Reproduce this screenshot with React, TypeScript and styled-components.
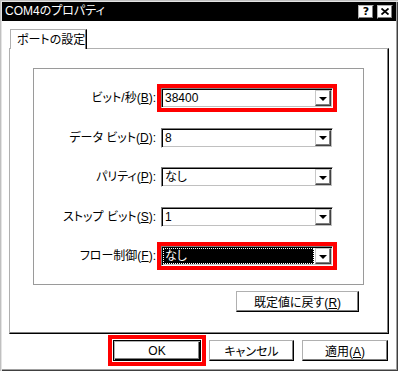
import React from 'react';
import styled, {createGlobalStyle, css} from 'styled-components';

const GlobalStyle = createGlobalStyle`
  body {
    margin: 0;
    background: #fff;
  }
`;

const uiFont = `"Liberation Sans", "Noto Sans CJK JP", sans-serif`;

const raised = css`
  border: 1px solid;
  border-color: #b0b0b0 #000 #000 #b0b0b0;
  box-shadow: inset -1px -1px #808080;
`;

const Window = styled.div`
  box-sizing: border-box;
  width: 398px;
  height: 371px;
  padding: 2px;
  background: #fff;
  box-shadow: inset 1px 1px #c0c0c0, inset 2px 2px #e4e4e4, inset -1px -1px #404040, inset -2px -2px #a0a0a0;
  display: flex;
  flex-direction: column;
  font-family: ${uiFont};
  font-size: 12px;
  font-feature-settings: 'palt';
  color: #000;
`;

const TitleBar = styled.div`
  height: 19px;
  background: #000;
  color: #fff;
  display: flex;
  align-items: center;
  justify-content: space-between;
  padding: 0 3px 0 3px;
`;

const Title = styled.span`
  font-size: 12px;
  line-height: 19px;
  white-space: nowrap;
`;

const TitleButtons = styled.div`
  display: flex;
  gap: 3px;
`;

const TitleButton = styled.div`
  box-sizing: border-box;
  width: 16px;
  height: 14px;
  background: #fff;
  color: #000;
  ${raised};
  display: flex;
  align-items: center;
  justify-content: center;
  font-family: "DejaVu Sans", sans-serif;
  font-weight: bold;
  font-size: 11px;
  line-height: 1;
`;

const Body = styled.div`
  flex: 1;
  display: flex;
  flex-direction: column;
  padding: 8px 7px 0 7px;
`;

const TabStrip = styled.div`
  display: flex;
  padding-left: 1px;
`;

const Tab = styled.div`
  position: relative;
  z-index: 1;
  box-sizing: border-box;
  width: 77px;
  height: 20px;
  margin-bottom: -1px;
  padding: 2px 0 0 6px;
  background: #fff;
  border: 1px solid;
  border-bottom: 0;
  border-color: #b0b0b0 #000 #000 #b0b0b0;
  box-shadow: inset -1px 0 #808080;
  line-height: 16px;
  white-space: nowrap;
`;

const Panel = styled.div`
  box-sizing: border-box;
  width: 380px;
  height: 286px;
  padding: 19px 24px 0 23px;
  border: 1px solid;
  border-color: #b0b0b0 #000 #000 #b0b0b0;
  box-shadow: inset -1px -1px #808080;
  display: flex;
  flex-direction: column;
`;

const Group = styled.div`
  box-sizing: border-box;
  width: 331px;
  height: 217px;
  padding-top: 19px;
  border: 1px solid #9a9a9a;
  display: grid;
  grid-template-columns: 122px 172px;
  column-gap: 5px;
  row-gap: 19.5px;
  align-content: start;
`;

const Label = styled.label`
  align-self: center;
  text-align: right;
  white-space: nowrap;
  line-height: 20px;
`;

const Combo = styled.div<{$highlight?: boolean}>`
  box-sizing: border-box;
  height: 20px;
  padding: 1px;
  display: flex;
  border: 1px solid;
  border-color: #808080 #fff #fff #808080;
  box-shadow: inset 1px 1px #000, inset -1px -1px #c0c0c0;
  ${(p) =>
    p.$highlight &&
    css`
      outline: 4px solid #f00;
    `}
`;

const Value = styled.div<{$selected?: boolean}>`
  flex: 1;
  box-sizing: border-box;
  height: 16px;
  padding-left: 2px;
  line-height: 16px;
  white-space: nowrap;
  ${(p) =>
    p.$selected &&
    css`
      margin-right: 1px;
      padding-left: 1px;
      background: #000;
      color: #fff;
      border: 1px dotted #fff;
      line-height: 14px;
    `}
`;

const DropButton = styled.div`
  box-sizing: border-box;
  width: 16px;
  height: 16px;
  background: #fff;
  border: 1px solid;
  border-color: #c8c8c8 #404040 #404040 #c8c8c8;
  box-shadow: inset -1px -1px #808080;
  display: flex;
  align-items: center;
  justify-content: center;

  &::after {
    content: '';
    width: 0;
    height: 0;
    border-left: 4px solid transparent;
    border-right: 4px solid transparent;
    border-top: 4px solid #000;
    margin: 1px 1px 0 0;
  }
`;

const ResetRow = styled.div`
  display: flex;
  justify-content: flex-end;
  margin: 6px 5px 0 0;
`;

const Button = styled.button<{$width: number; $default?: boolean; $highlight?: boolean}>`
  box-sizing: border-box;
  width: ${(p) => p.$width}px;
  height: 21px;
  padding: 0;
  background: #fff;
  font-family: ${uiFont};
  font-feature-settings: 'palt';
  font-size: 12px;
  color: #000;
  ${raised};
  ${(p) =>
    p.$default &&
    css`
      border: 1px solid #000;
      box-shadow: inset 1px 1px #b0b0b0, inset -1px -1px #000, inset -2px -2px #808080;
    `}
  ${(p) =>
    p.$highlight &&
    css`
      outline: 4px solid #f00;
      outline-offset: 1px;
    `}
`;

const Footer = styled.div`
  display: flex;
  justify-content: flex-end;
  gap: 8px;
  padding: 6px 1px 0 0;
`;

const CloseGlyph = () => (
  <svg width="8" height="7" viewBox="0 0 8 7">
    <path d="M0.5 0.5 L7.5 6.5 M7.5 0.5 L0.5 6.5" stroke="#000" strokeWidth="1.8" />
  </svg>
);

const fields = [
  {label: 'ビット/秒(', key: 'B', value: '38400', highlight: true},
  {label: 'データ ビット(', key: 'D', value: '8'},
  {label: 'パリティ(', key: 'P', value: 'なし'},
  {label: 'ストップ ビット(', key: 'S', value: '1'},
  {label: 'フロー制御(', key: 'F', value: 'なし', highlight: true, selected: true},
];

export default function App() {
  return (
    <>
      <GlobalStyle />
      <Window>
        <TitleBar>
          <Title>COM4のプロパティ</Title>
          <TitleButtons>
            <TitleButton>?</TitleButton>
            <TitleButton>
              <CloseGlyph />
            </TitleButton>
          </TitleButtons>
        </TitleBar>
        <Body>
          <TabStrip>
            <Tab>ポートの設定</Tab>
          </TabStrip>
          <Panel>
            <Group>
              {fields.map((f) => (
                <React.Fragment key={f.key}>
                  <Label>
                    {f.label}
                    <u>{f.key}</u>):
                  </Label>
                  <Combo $highlight={f.highlight}>
                    <Value $selected={f.selected}>{f.value}</Value>
                    <DropButton />
                  </Combo>
                </React.Fragment>
              ))}
            </Group>
            <ResetRow>
              <Button $width={123}>
                既定値に戻す(<u>R</u>)
              </Button>
            </ResetRow>
          </Panel>
          <Footer>
            <Button $width={88} $default $highlight>
              OK
            </Button>
            <Button $width={85}>キャンセル</Button>
            <Button $width={86}>
              適用(<u>A</u>)
            </Button>
          </Footer>
        </Body>
      </Window>
    </>
  );
}
